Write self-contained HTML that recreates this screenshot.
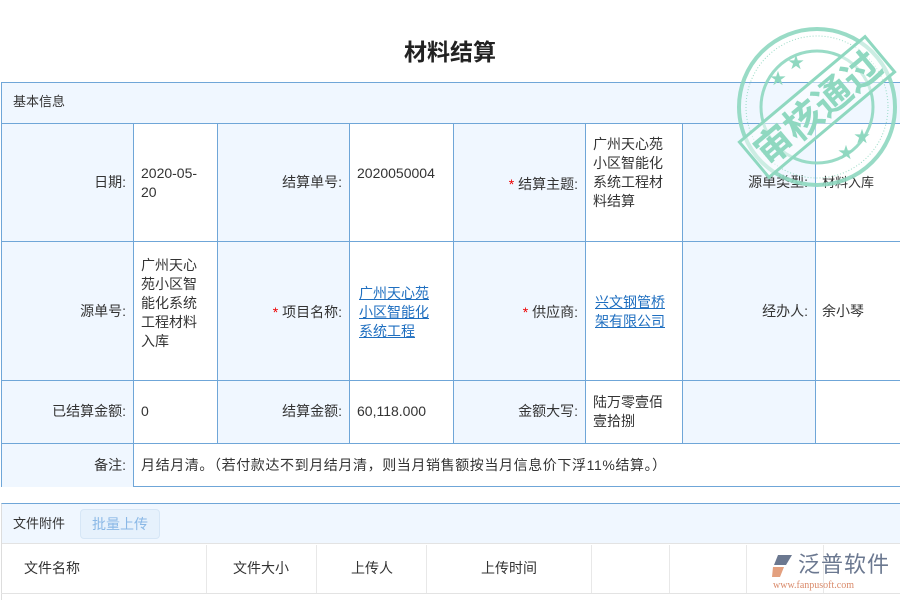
<!DOCTYPE html>
<html><head><meta charset="utf-8"><style>
*{margin:0;padding:0;box-sizing:border-box}
body{width:900px;height:600px;overflow:hidden;background:#fff;font-family:"Liberation Sans","Noto Sans CJK SC",sans-serif;font-size:14px;color:#333;position:relative}
.a{position:absolute}
.c{position:absolute;border-left:1px solid #6fa6d8;border-top:1px solid #6fa6d8}
.lb{background:#f0f7ff}
.t{position:absolute;line-height:19px}
.r{text-align:right}
.star{color:#e00}
a{color:#1f6fc0;text-decoration:underline}
</style></head><body>
<div class="a" style="left:0;width:900px;top:33px;text-align:center;font-size:23px;font-weight:bold;color:#222">材料结算</div>

<div class="a" style="left:1px;top:82px;width:899px;height:405px;border:1px solid #6fa6d8;border-right:none"></div>
<div class="a lb" style="left:2px;top:83px;width:898px;height:40px"></div>
<div class="t" style="left:13px;top:92px;font-size:13px">基本信息</div>

<div class="c lb" style="left:1px;top:123px;width:132px;height:118px"></div>
<div class="c" style="left:133px;top:123px;width:84px;height:118px"></div>
<div class="c lb" style="left:217px;top:123px;width:132px;height:118px"></div>
<div class="c" style="left:349px;top:123px;width:104px;height:118px"></div>
<div class="c lb" style="left:453px;top:123px;width:132px;height:118px"></div>
<div class="c" style="left:585px;top:123px;width:97px;height:118px"></div>
<div class="c lb" style="left:682px;top:123px;width:133px;height:118px"></div>
<div class="c" style="left:815px;top:123px;width:85px;height:118px"></div>

<div class="c lb" style="left:1px;top:241px;width:132px;height:139px"></div>
<div class="c" style="left:133px;top:241px;width:84px;height:139px"></div>
<div class="c lb" style="left:217px;top:241px;width:132px;height:139px"></div>
<div class="c" style="left:349px;top:241px;width:104px;height:139px"></div>
<div class="c lb" style="left:453px;top:241px;width:132px;height:139px"></div>
<div class="c" style="left:585px;top:241px;width:97px;height:139px"></div>
<div class="c lb" style="left:682px;top:241px;width:133px;height:139px"></div>
<div class="c" style="left:815px;top:241px;width:85px;height:139px"></div>

<div class="c lb" style="left:1px;top:380px;width:132px;height:63px"></div>
<div class="c" style="left:133px;top:380px;width:84px;height:63px"></div>
<div class="c lb" style="left:217px;top:380px;width:132px;height:63px"></div>
<div class="c" style="left:349px;top:380px;width:104px;height:63px"></div>
<div class="c lb" style="left:453px;top:380px;width:132px;height:63px"></div>
<div class="c" style="left:585px;top:380px;width:97px;height:63px"></div>
<div class="c lb" style="left:682px;top:380px;width:133px;height:63px"></div>
<div class="c" style="left:815px;top:380px;width:85px;height:63px"></div>

<div class="c lb" style="left:1px;top:443px;width:132px;height:44px"></div>
<div class="c" style="left:133px;top:443px;width:767px;height:44px"></div>

<div class="t r" style="left:1px;width:125px;top:173px">日期:</div>
<div class="t" style="left:141px;top:164px;width:72px">2020-05-<br>20</div>
<div class="t r" style="left:217px;width:125px;top:173px">结算单号:</div>
<div class="t" style="left:357px;top:164px">2020050004</div>
<div class="t r" style="left:453px;width:125px;top:175px"><span class="star">*</span> 结算主题:</div>
<div class="t" style="left:593px;top:135px;width:85px">广州天心苑<br>小区智能化<br>系统工程材<br>料结算</div>
<div class="t r" style="left:682px;width:126px;top:173px">源单类型:</div>
<div class="t" style="left:822px;top:173px;font-size:13px">材料入库</div>

<div class="t r" style="left:1px;width:125px;top:302px">源单号:</div>
<div class="t" style="left:141px;top:256px;width:72px">广州天心<br>苑小区智<br>能化系统<br>工程材料<br>入库</div>
<div class="t r" style="left:217px;width:125px;top:303px"><span class="star">*</span> 项目名称:</div>
<div class="t" style="left:359px;top:284px"><a>广州天心苑</a><br><a>小区智能化</a><br><a>系统工程</a></div>
<div class="t r" style="left:453px;width:125px;top:303px"><span class="star">*</span> 供应商:</div>
<div class="t" style="left:595px;top:293px"><a>兴文钢管桥</a><br><a>架有限公司</a></div>
<div class="t r" style="left:682px;width:126px;top:302px">经办人:</div>
<div class="t" style="left:822px;top:302px">余小琴</div>

<div class="t r" style="left:1px;width:125px;top:402px">已结算金额:</div>
<div class="t" style="left:141px;top:402px">0</div>
<div class="t r" style="left:217px;width:125px;top:402px">结算金额:</div>
<div class="t" style="left:357px;top:402px">60,118.000</div>
<div class="t r" style="left:453px;width:125px;top:402px">金额大写:</div>
<div class="t" style="left:593px;top:393px">陆万零壹佰<br>壹拾捌</div>

<div class="t r" style="left:1px;width:125px;top:456px">备注:</div>
<div class="t" style="left:141px;top:456px;letter-spacing:0.6px">月结月清。（若付款达不到月结月清，则当月销售额按当月信息价下浮11%结算。）</div>

<div class="a" style="left:1px;top:503px;width:899px;height:97px;border-top:1px solid #6fa6d8;border-left:1px solid #ddd"></div>
<div class="a lb" style="left:2px;top:504px;width:898px;height:40px;border-bottom:1px solid #e3e3e3"></div>
<div class="t" style="left:13px;top:514px;font-size:13px">文件附件</div>
<div class="a" style="left:80px;top:509px;width:80px;height:30px;border:1px solid #d6e6f6;border-radius:4px;background:#e6f1fc;color:#8ab8e6;text-align:center;line-height:28px">批量上传</div>
<div class="a" style="left:1px;top:593px;width:899px;border-top:1px solid #e3e3e3"></div>
<div class="a" style="left:206px;top:545px;height:48px;border-left:1px solid #e8e8e8"></div>
<div class="a" style="left:316px;top:545px;height:48px;border-left:1px solid #e8e8e8"></div>
<div class="a" style="left:426px;top:545px;height:48px;border-left:1px solid #e8e8e8"></div>
<div class="a" style="left:591px;top:545px;height:48px;border-left:1px solid #e8e8e8"></div>
<div class="a" style="left:669px;top:545px;height:48px;border-left:1px solid #e8e8e8"></div>
<div class="a" style="left:746px;top:545px;height:48px;border-left:1px solid #e8e8e8"></div>
<div class="a" style="left:823px;top:545px;height:48px;border-left:1px solid #e8e8e8"></div>
<div class="t" style="left:24px;top:559px">文件名称</div>
<div class="t" style="left:233px;top:559px">文件大小</div>
<div class="t" style="left:351px;top:559px">上传人</div>
<div class="t" style="left:481px;top:559px">上传时间</div>

<svg class="a" style="left:770px;top:553px" width="26" height="26" viewBox="0 0 26 26">
<path d="M8 2 L22 2 L16 12 L4 12 Z" fill="#6b7890"/><path d="M3 14 L14 14 L10 24 L2 24 Z" fill="#e3a07f"/></svg>
<div class="a" style="left:798px;top:552px;font-size:22px;color:#6b7890;line-height:26px;letter-spacing:1px">泛普软件</div>
<div class="a" style="left:773px;top:580px;font-size:10px;color:#d98a6a;font-family:'Liberation Serif',serif">www.fanpusoft.com</div>

<svg class="a" style="left:732px;top:22px" width="170" height="170" viewBox="0 0 170 170">
<g fill="none" stroke="#8fd8c0" opacity="0.9">
<circle cx="85" cy="85" r="78" stroke-width="4"/>
<circle cx="85" cy="85" r="71" stroke-width="1" stroke-dasharray="1 2"/>
<circle cx="85" cy="85" r="56" stroke-width="3"/>
</g>
<g transform="rotate(-40 85 85)">
<rect x="3" y="62" width="164" height="46" fill="#fff" fill-opacity="0.5" stroke="#8fd8c0" stroke-width="3"/>
<text x="85" y="100" text-anchor="middle" font-size="38" font-weight="bold" fill="#8fd8c0" font-family="Noto Sans CJK SC,sans-serif">审核通过</text>
</g>
<g fill="#8fd8c0" font-size="16"><text x="38" y="62">★</text><text x="56" y="46">★</text><text x="106" y="136">★</text><text x="122" y="120">★</text></g>
</svg>
</body></html>
